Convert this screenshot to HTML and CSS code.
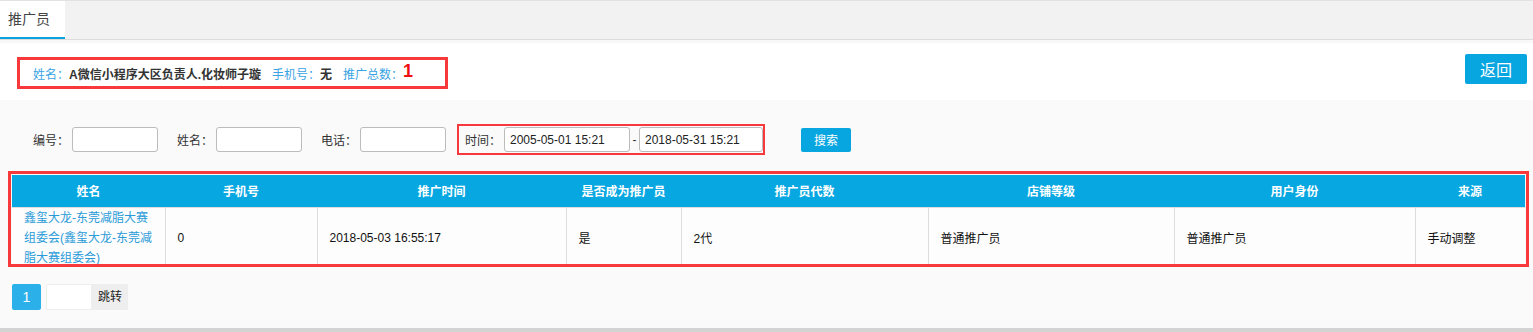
FILE: index.html
```html
<!DOCTYPE html>
<html lang="zh">
<head>
<meta charset="utf-8">
<title>推广员</title>
<link rel="stylesheet" href="styles.css">
</head>
<body>
<div class="tabs">
  <div class="tab active">推广员</div>
</div>
<div class="head">
  <div class="info">
    <span class="k">姓名：</span><span class="v">A微信小程序大区负责人.化妆师子璇</span>
    <span class="k gap">手机号：</span><span class="v">无</span>
    <span class="k gap">推广总数：</span><span class="num">1</span>
  </div>
  <button class="btn back">返回</button>
</div>
<div class="main">
  <div class="filter">
    <label class="lbl">编号：</label><input class="inp" type="text">
    <label class="lbl sp">姓名：</label><input class="inp" type="text">
    <label class="lbl sp">电话：</label><input class="inp" type="text">
    <div class="timebox">
      <label class="lbl">时间：</label><input class="inp date" type="text" value="2005-05-01 15:21"><span class="dash">-</span><input class="inp date2" type="text" value="2018-05-31 15:21">
    </div>
    <button class="btn search">搜索</button>
  </div>
  <div class="tablebox">
    <table class="grid">
      <colgroup>
        <col class="c1"><col class="c2"><col class="c3"><col class="c4"><col class="c5"><col class="c6"><col class="c7"><col class="c8">
      </colgroup>
      <thead>
        <tr><th>姓名</th><th>手机号</th><th>推广时间</th><th>是否成为推广员</th><th>推广员代数</th><th>店铺等级</th><th>用户身份</th><th>来源</th></tr>
      </thead>
      <tbody>
        <tr>
          <td class="name"><div class="clip"><a>鑫玺大龙-东莞减脂大赛组委会(鑫玺大龙-东莞减脂大赛组委会)</a></div></td>
          <td>0</td>
          <td>2018-05-03 16:55:17</td>
          <td>是</td>
          <td>2代</td>
          <td>普通推广员</td>
          <td>普通推广员</td>
          <td>手动调整</td>
        </tr>
      </tbody>
    </table>
  </div>
  <div class="pager">
    <span class="page cur">1</span><input class="pinp" type="text"><span class="go">跳转</span>
  </div>
</div>
</body>
</html>
```

FILE: styles.css
```css
* { box-sizing: border-box; }
html, body { margin: 0; padding: 0; }
body {
  width: 1533px;
  height: 332px;
  overflow: hidden;
  font-family: "Liberation Sans", "Noto Sans CJK SC", sans-serif;
  font-size: 12px;
  color: #333;
  background: #fff;
}
.tabs {
  height: 40px;
  background: #f2f2f2;
  border-top: 1px solid #e2e2e2;
  border-bottom: 1px solid #dcdcdc;
  display: flex;
}
.tab {
  width: 65px;
  padding-left: 8px;
  font-size: 14px;
  line-height: 36px;
  color: #444;
}
.tab.active {
  background: #fff;
  border-bottom: 2px solid #0ba4e0;
}
.head {
  height: 60px;
  border-top: 3px solid #f8f8f8;
  display: flex;
  justify-content: space-between;
  align-items: flex-start;
  padding-right: 6px;
}
.info {
  margin: 14px 0 0 17px;
  width: 431px;
  height: 32px;
  border: 3px solid #f7393c;
  display: flex;
  align-items: center;
  padding-left: 13px;
  white-space: nowrap;
}
.k { color: #3aa3e3; }
.v { font-weight: bold; color: #333; }
.gap { margin-left: 11px; }
.num { color: #f01010; font-weight: bold; font-size: 18px; line-height: 18px; position: relative; top: -2px; }
.btn {
  border: 0;
  background: #08a6e1;
  color: #fff;
  font-family: "Liberation Sans", "Noto Sans CJK SC", sans-serif;
  border-radius: 2px;
  padding: 0;
  cursor: pointer;
}
.back {
  margin-top: 11px;
  width: 62px;
  height: 30px;
  font-size: 16px;
}
.main {
  height: 232px;
  background: #fafafa;
  border-bottom: 4px solid #d3d3d3;
  padding: 24px 0 0 8px;
}
.filter {
  display: flex;
  align-items: center;
  height: 31px;
  padding-left: 25px;
}
.lbl { width: 39px; flex: none; color: #333; white-space: nowrap; }
.sp { margin-left: 19px; }
.inp {
  width: 86px;
  height: 25px;
  border: 1px solid #bcbcbc;
  border-radius: 3px;
  background: #fff;
  font-family: "Liberation Sans", "Noto Sans CJK SC", sans-serif;
  font-size: 12px;
  padding: 0 5px;
  color: #222;
  outline: none;
}
.timebox {
  margin-left: 11px;
  width: 308px;
  height: 31px;
  border: 2px solid #f7393c;
  display: flex;
  align-items: center;
  padding-left: 6px;
}
.date { width: 126px; }
.dash { width: 11px; text-align: center; }
.date2 { width: 124px; }
.search {
  margin-left: 36px;
  width: 50px;
  height: 24px;
  font-size: 12px;
}
.tablebox {
  margin-top: 16px;
  width: 1521px;
  height: 96px;
  border: 3px solid #f7393c;
  padding: 1px 0 0 1px;
  overflow: hidden;
}
.grid {
  border-collapse: collapse;
  table-layout: fixed;
  width: 1513px;
}
.c1 { width: 153px; } .c2 { width: 152px; } .c3 { width: 249px; } .c4 { width: 115px; }
.c5 { width: 247px; } .c6 { width: 246px; } .c7 { width: 241px; } .c8 { width: 110px; }
.grid th {
  background: #07a7e1;
  color: #fff;
  font-weight: bold;
  height: 32px;
  padding: 0;
  text-align: center;
  border-bottom: 1px solid #dddddd;
}
.grid td {
  background: #fdfdfd;
  height: 60px;
  padding: 0 0 0 12px;
  border-left: 1px solid #dddddd;
  vertical-align: middle;
  color: #111;
}
.grid td:first-child { border-left: 0; }
.grid td.name { vertical-align: top; padding: 0 12px 0 12px; }
.clip { line-height: 20px; }
.clip a { color: #2a9bd8; }
.pager {
  margin: 17px 0 0 4px;
  display: flex;
  height: 26px;
}
.page {
  width: 29px;
  height: 26px;
  line-height: 26px;
  text-align: center;
  background: #2cb0ea;
  color: #fff;
  font-size: 14px;
  border-radius: 2px;
}
.pinp {
  margin-left: 5px;
  width: 46px;
  height: 26px;
  border: 1px solid #eeeeee;
  background: #fff;
  outline: none;
}
.go {
  width: 36px;
  height: 26px;
  line-height: 26px;
  background: #eeeeee;
  text-align: center;
  color: #222;
}
```
